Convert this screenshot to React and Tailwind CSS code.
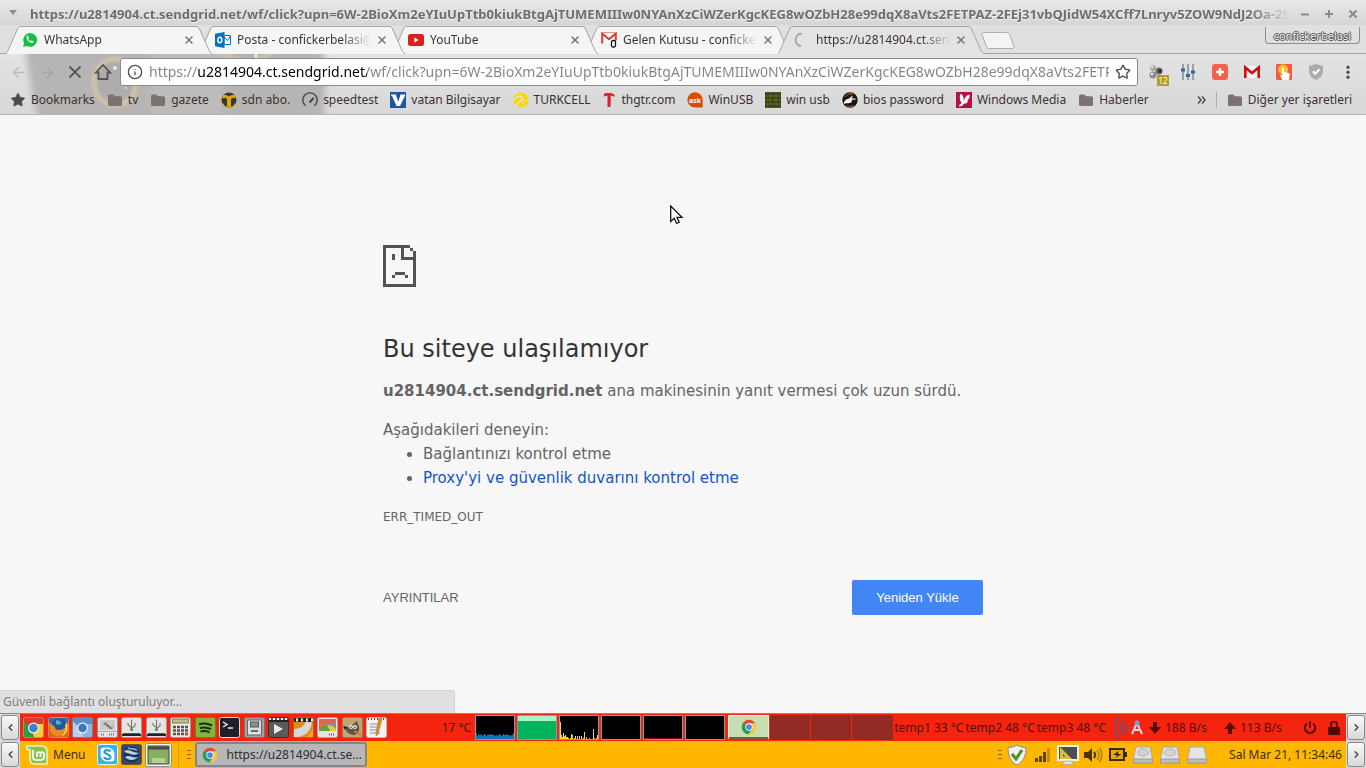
import { useState } from 'react';
import { ChevronLeft, ChevronRight, X, Star, Info, ArrowLeft, ArrowRight } from 'lucide-react';

const PAGE_URL =
  'https://u2814904.ct.sendgrid.net/wf/click?upn=6W-2BioXm2eYIuUpTtb0kiukBtgAjTUMEMIIIw0NYAnXzCiWZerKgcKEG8wOZbH28e99dqX8aVts2FETPAZ-2FEj31vbQJidW54XCff7Lnryv5ZOW9NdJ2Oa-2B';

/* ---------- small favicons ---------- */

const WhatsAppIcon = () => (
  <svg width="16" height="16" viewBox="0 0 16 16" className="shrink-0">
    <path d="M1 15l1.1-3.7A6.9 6.9 0 1 1 4.8 14z" fill="#12c143" />
    <path d="M5 3.800c.6-.4 1-.1 1.200.4l.6 1.500c.1.500-.5.8-.6 1.200.6 1.100 1.400 1.800 2.500 2.300.5-.2.800-1 1.300-.8l1.500.8c.4.3.2 1-.2 1.500-2.100 1.900-8.500-3.200-6.300-6.900z" fill="#fff" />
  </svg>
);

const OutlookIcon = () => (
  <svg width="16" height="16" viewBox="0 0 16 16" className="shrink-0">
    <path d="M9 3.500h6.500v9H9z" fill="#fff" stroke="#0072c6" />
    <path d="M9 5l3.500 3.500L15.500 4" fill="none" stroke="#0072c6" />
    <path d="M0 1.800L9.500 0v16L0 14.200z" fill="#0072c6" />
    <ellipse cx="4.800" cy="8" rx="2" ry="2.700" fill="none" stroke="#fff" strokeWidth="1.500" />
  </svg>
);

const YouTubeIcon = () => (
  <svg width="16" height="16" viewBox="0 0 16 16" className="shrink-0">
    <rect y="2" width="16" height="12" rx="2.500" fill="#d8201f" />
    <path d="M6.300 5.500v5L10.700 8z" fill="#fff" />
  </svg>
);

const GmailTabIcon = () => (
  <svg width="16" height="16" viewBox="0 0 16 16" className="shrink-0">
    <rect x="1" y="1" width="14" height="10" fill="#fff" />
    <path d="M1.200 11.500V1.500L8 7.300l6.800-5.800v7" fill="none" stroke="#dd3b30" strokeWidth="2" />
    <path d="M1 .5h14" stroke="#e9938c" />
    <rect x="10.500" y="8.500" width="4" height="6.500" rx="1.500" fill="#fff" stroke="#111" strokeWidth="1.300" />
  </svg>
);

const Spinner = () => (
  <svg width="16" height="16" viewBox="0 0 16 16" className="shrink-0">
    <path d="M8 1.700A6.300 6.300 0 0 0 3.500 12.500c1 1 2 1.500 3.500 1.700" fill="none" stroke="#a4a4a4" strokeWidth="1.800" />
  </svg>
);

const FolderIcon = () => (
  <svg width="16" height="16" viewBox="0 0 16 16" className="shrink-0">
    <path d="M1 4a1.500 1.500 0 0 1 1.500-1.500h3.700L8 4.200h5.500A1.500 1.500 0 0 1 15 5.700v6.800a1.500 1.500 0 0 1-1.500 1.500h-11A1.500 1.500 0 0 1 1 12.500z" fill="#7d7272" />
  </svg>
);

const SdnIcon = () => (
  <svg width="16" height="16" viewBox="0 0 16 16" className="shrink-0">
    <circle cx="8" cy="8" r="7.500" fill="#3b372c" />
    <path d="M1 4.500C3 2 6 3 8 4.500 10 3 13 2 15 4.500l-1 2c-2-.8-3.500-.5-4 1V15H6V7.500c-.5-1.500-2-1.800-4-1z" fill="#d7a812" />
    <path d="M1.500 11c2 3.500 4 4.500 6.500 4.500s4.500-1 6.500-4.500" fill="none" stroke="#c49a18" />
  </svg>
);

const SpeedIcon = () => (
  <svg width="16" height="16" viewBox="0 0 16 16" className="shrink-0">
    <path d="M3.600 13.700a7.200 7.200 0 1 1 8.800 0" fill="none" stroke="#555" strokeWidth="1.600" />
    <path d="M7.500 10.500L11.500 6" stroke="#444" strokeWidth="2" />
  </svg>
);

const VatanIcon = () => (
  <svg width="16" height="16" viewBox="0 0 16 16" className="shrink-0">
    <rect width="16" height="16" fill="#1d579f" />
    <path d="M1 2.500h5.200v1.200l2 6 2-6V2.500H15v1.200L10 14H6.500L2 3.700H1z" fill="#fff" />
  </svg>
);

const TurkcellIcon = () => (
  <svg width="16" height="16" viewBox="0 0 16 16" className="shrink-0">
    <circle cx="8" cy="8" r="7.500" fill="#fbd608" />
    <path d="M0 7.500c3 0 4-3.500 7-3.500 2.500 0 3.500 3 1 4.500S4 10.500 4 14" fill="none" stroke="#e4e4e4" strokeWidth="1.500" />
    <path d="M9 12c1-3 3-4 6-4" fill="none" stroke="#efe9b0" />
  </svg>
);

const ThIcon = () => (
  <svg width="14" height="16" viewBox="0 0 14 16" className="shrink-0">
    <path d="M2 4.500V1.800l2-.8h5l3.500 1.500V5L10 3.800H8.700V14l-1 1H5.500V3.800z" fill="#d9262c" />
  </svg>
);

const AskIcon = () => (
  <svg width="16" height="16" viewBox="0 0 16 16" className="shrink-0">
    <path d="M8 .3A7.700 7.700 0 0 1 15.700 8v7.500H8A7.600 7.600 0 0 1 8 .3z" fill="#dc4a06" />
    <text x="8" y="10.500" textAnchor="middle" fontSize="7" fontWeight="bold" fontFamily="Noto Sans, sans-serif" fill="#fff">ask</text>
  </svg>
);

const MossIcon = () => (
  <svg width="16" height="16" viewBox="0 0 16 16" className="shrink-0">
    <rect width="16" height="16" fill="#4a541d" />
    <path d="M0 2h16M0 6h16M0 10h16M0 14h16" stroke="#2c3511" strokeWidth="1.500" strokeDasharray="2 1 1 2" />
    <path d="M1 4h15M0 8h15M2 12h14" stroke="#6f7830" strokeDasharray="1 2 2 1" />
  </svg>
);

const BiosIcon = () => (
  <svg width="16" height="16" viewBox="0 0 16 16" className="shrink-0">
    <circle cx="8" cy="8" r="7.700" fill="#1b1512" />
    <path d="M3 5a6 6 0 0 1 8-2.500M4.500 13.500a6 6 0 0 0 7-.2" fill="none" stroke="#8d4b1d" strokeWidth="1.500" />
    <path d="M2 10l2-2.500 3-1L10 4l1 .8L9.500 6.500h4v1.300H10l-.5 2.700-3 .8H4L2 12z" fill="#f4f1ee" />
  </svg>
);

const MediaIcon = () => (
  <svg width="16" height="16" viewBox="0 0 16 16" className="shrink-0">
    <rect width="16" height="16" fill="#b50f43" />
    <path d="M4.500 2c2.500 0 3.500 4 3.300 7.500C8.500 5.500 10.500 3 13.500 2.500c.5 3-.5 4.500-2 5.500 1 1.500-.5 3.500-2.500 3.500l-1.500.3c-.5 2-2 2.700-4.500 2.700 0-1.500 1-2.700 2.800-3.200C3.500 8 3.300 4 4.500 2z" fill="#fff" />
  </svg>
);

const ChromeIcon = ({ size = 16 }) => (
  <svg width={size} height={size} viewBox="0 0 24 24" className="shrink-0">
    <circle cx="12" cy="12" r="11" fill="#f5c83a" />
    <path d="M12 12L2.500 6.500A11 11 0 0 1 21.500 6.500H12z" fill="#dd4b3e" />
    <path d="M12 12L2.500 6.500A11 11 0 0 0 11.500 23l5-8.500z" fill="#1fa05c" />
    <circle cx="12" cy="12" r="5.500" fill="#fff" />
    <circle cx="12" cy="12" r="4.300" fill="#4a86e8" />
  </svg>
);

/* ---------- browser window ---------- */

const tabs = [
  { title: 'WhatsApp', icon: <WhatsAppIcon />, layer: 'z-4' },
  { title: 'Posta - confickerbelasi@hotmail', icon: <OutlookIcon />, layer: 'z-3' },
  { title: 'YouTube', icon: <YouTubeIcon />, layer: 'z-2' },
  { title: 'Gelen Kutusu - confickerbelasi', icon: <GmailTabIcon />, layer: 'z-1' },
  { title: 'https://u2814904.ct.sendgrid.net', icon: <Spinner />, layer: 'z-5', active: true },
];

const bookmarks = [
  { label: 'Bookmarks', icon: <Star size={16} fill="#4f4a4a" stroke="#4f4a4a" strokeWidth={1} strokeLinejoin="miter" className="shrink-0" /> },
  { label: 'tv', icon: <FolderIcon /> },
  { label: 'gazete', icon: <FolderIcon /> },
  { label: 'sdn abo.', icon: <SdnIcon /> },
  { label: 'speedtest', icon: <SpeedIcon /> },
  { label: 'vatan Bilgisayar', icon: <VatanIcon /> },
  { label: 'TURKCELL', icon: <TurkcellIcon /> },
  { label: 'thgtr.com', icon: <ThIcon /> },
  { label: 'WinUSB', icon: <AskIcon /> },
  { label: 'win usb', icon: <MossIcon /> },
  { label: 'bios password', icon: <BiosIcon /> },
  { label: 'Windows Media', icon: <MediaIcon /> },
  { label: 'Haberler', icon: <FolderIcon /> },
];

function TitleBar() {
  return (
    <header className="flex h-[25px] items-center bg-linear-to-b from-[#e9e9e9] to-[#d5d5d5] pl-2 pr-[5px]">
      <button aria-label="Pencere menüsü" className="mr-3 shrink-0">
        <svg width="10" height="6" viewBox="0 0 10 6" className="block">
          <path d="M1 0h8L5 5z" fill="#8f8f8f" />
        </svg>
      </button>
      <h1 className="min-w-0 flex-1 overflow-hidden whitespace-nowrap pt-[2px] text-[13px] leading-5 font-bold text-[#6e6e6e] [text-shadow:0_1px_0_#f4f4f4] [mask-image:linear-gradient(to_left,transparent,#000_40px)]">
        {PAGE_URL}
      </h1>
      <div className="ml-2 flex shrink-0 gap-2 pt-[2px]">
        <button aria-label="Küçült" className="flex size-4 items-center justify-center">
          <svg width="10" height="10" viewBox="0 0 10 10"><path d="M1 5.500h8" stroke="#8b8b8b" strokeWidth="2" /></svg>
        </button>
        <button aria-label="Büyüt" className="flex size-4 items-center justify-center">
          <svg width="10" height="10" viewBox="0 0 10 10"><path d="M1 5h8M5 1v8" stroke="#8b8b8b" strokeWidth="2" /></svg>
        </button>
        <button aria-label="Kapat" className="flex size-4 items-center justify-center">
          <svg width="10" height="10" viewBox="0 0 10 10"><path d="M1.500 1.500l7 7M8.500 1.500l-7 7" stroke="#8b8b8b" strokeWidth="2.200" /></svg>
        </button>
      </div>
    </header>
  );
}

function Tab({ tab }) {
  return (
    <div className={`relative -mr-[13px] flex h-7 w-[206px] items-center pl-4 pr-[17px] ${tab.layer}`}>
      <svg viewBox="0 0 206 28" preserveAspectRatio="none" className="absolute inset-0 -z-10 h-full w-full">
        <path
          d="M0 28L1.500 25.500L11.500 3C12.500 1 13 .5 15 .5H190C192 .5 192.500 1 193.500 3L203.500 25.500L206 28"
          fill={tab.active ? '#e3e3e3' : '#f5f5f5'}
          stroke="#a5a5a5"
        />
      </svg>
      {tab.icon}
      <button className="ml-[6px] min-w-0 flex-1 overflow-hidden whitespace-nowrap text-left text-xs text-[#3c3535] [mask-image:linear-gradient(to_left,transparent,#000_30px)]">
        {tab.title}
      </button>
      <button aria-label="Sekmeyi kapat" className="ml-1 shrink-0">
        <X size={12} strokeWidth={3} color="#7d7474" />
      </button>
    </div>
  );
}

function TabStrip() {
  return (
    <div className="relative isolate flex h-[29px] items-end bg-[#e0e0e2] pl-[6px] shadow-[inset_0_-1px_0_#a5a5a5]">
      {tabs.map((tab) => (
        <Tab key={tab.title} tab={tab} />
      ))}
      <button aria-label="Yeni sekme" className="mb-1 ml-[9px]">
        <svg width="36" height="18" viewBox="0 0 36 18" className="block">
          <path d="M3.500.5H26c2 0 3 .5 3.500 2l4.500 12c.5 1.500 0 2-1.500 2H10c-2 0-3-.5-3.500-2L2 2.500C1.500 1 2 .5 3.500.5z" fill="#f4f4f4" stroke="#adadad" />
        </svg>
      </button>
      <button className="mb-[10px] ml-auto mr-[6px] h-[17px] rounded-b border border-t-0 border-[#8c8c8c] px-2 text-[11px] leading-[17px] text-[#f0f0f0] [text-shadow:1px_0_0_#555,-1px_0_0_#555,0_1px_0_#555,0_-1px_0_#555]">
        confickerbelasi
      </button>
    </div>
  );
}

// Soft cat portrait of the browser theme, behind the toolbar rows
function ThemeArt() {
  return (
    <svg width="360" height="61" viewBox="0 0 360 61" className="absolute left-0 top-0 -z-10">
      <defs>
        <filter id="fur" x="-10%" y="-20%" width="120%" height="140%">
          <feGaussianBlur stdDeviation="3" />
        </filter>
        <filter id="iris">
          <feGaussianBlur stdDeviation="1" />
        </filter>
      </defs>
      <path d="M24 -10H323L326 30L323 75H40L32 40z" fill="#b7b5b4" filter="url(#fur)" />
      <path d="M150 -10h80l-10 80h-70z" fill="#bebcba" filter="url(#fur)" />
      <ellipse cx="115" cy="28" rx="21" ry="23" fill="#afadac" stroke="#cdc3aa" strokeWidth="5" filter="url(#iris)" />
      <path d="M222 -4c6 14 42 14 50 0" fill="#b4b2b1" stroke="#cdc3aa" strokeWidth="4" filter="url(#iris)" />
      <circle cx="115" cy="14" r="2" fill="#e3e6ea" />
      <circle cx="126" cy="34" r="1" fill="#e3e6ea" />
      <circle cx="256" cy="2" r="2" fill="#e3e6ea" />
    </svg>
  );
}

function Extensions() {
  return (
    <div className="flex shrink-0 items-center gap-4">
      <button aria-label="Ghostery" className="relative">
        <svg width="16" height="16" viewBox="0 0 16 16">
          <circle cx="5" cy="4" r="3" fill="#a5a5a5" />
          <circle cx="5" cy="11" r="3.500" fill="#8d8d8d" />
          <circle cx="11" cy="7" r="3.500" fill="#6b6b6b" />
          <circle cx="12" cy="7" r="2" fill="#333" />
          <circle cx="4" cy="3" r="1.300" fill="#eee" />
          <circle cx="4" cy="10" r="1.300" fill="#eee" />
        </svg>
        <span className="absolute left-[9px] top-[11px] h-[11px] w-3 bg-[#b39b28] text-center text-[8px] leading-[11px] text-white">12</span>
      </button>
      <button aria-label="Ekolayzer">
        <svg width="16" height="16" viewBox="0 0 16 16">
          <path d="M3 0v16M8 0v16M13 0v16" stroke="#8b8b8b" strokeWidth="1.500" />
          <path d="M1 6h4M6 11.500h4M11 8h4" stroke="#2f67a8" strokeWidth="3" />
        </svg>
      </button>
      <button aria-label="Ekle">
        <svg width="16" height="16" viewBox="0 0 16 16">
          <rect width="16" height="16" rx="3" fill="#f6614b" />
          <path d="M8 4v8M4 8h8" stroke="#fff" strokeWidth="2.400" />
        </svg>
      </button>
      <button aria-label="Gmail">
        <svg width="16" height="16" viewBox="0 0 16 16">
          <rect y="2" width="16" height="12" fill="#f3f3f3" />
          <path d="M1.300 14V3.500L8 9l6.700-5.500V14" fill="none" stroke="#d20f0f" strokeWidth="2.600" />
        </svg>
      </button>
      <button aria-label="Dokun">
        <svg width="16" height="16" viewBox="0 0 16 16">
          <rect width="16" height="16" rx="1" fill="#f65a44" />
          <circle cx="7" cy="5.500" r="5" fill="#f8c331" />
          <path d="M6 4c1-.8 2 0 2 1v3l4 .8c1.500.4 2 1.200 1.800 2.500L13 16H6.500L4 11.500c.5-1 1.500-.5 2 0z" fill="#fff" />
        </svg>
      </button>
      <button aria-label="Koruma">
        <svg width="16" height="16" viewBox="0 0 16 16">
          <path d="M8 0l7 2v5c0 4-3 7.500-7 9-4-1.500-7-5-7-9V2z" fill="#ababab" />
          <path d="M4.800 7.200l2.500 2.500 4.200-4.500" fill="none" stroke="#fff" strokeWidth="2" />
        </svg>
      </button>
      <button aria-label="Menü">
        <svg width="16" height="16" viewBox="0 0 16 16" fill="#595353">
          <circle cx="8" cy="3.200" r="1.700" />
          <circle cx="8" cy="8.200" r="1.700" />
          <circle cx="8" cy="13.200" r="1.700" />
        </svg>
      </button>
    </div>
  );
}

function Toolbar() {
  const [address, setAddress] = useState(PAGE_URL);

  return (
    <div className="flex h-9 items-center px-[10px]">
      <div className="flex shrink-0 items-center gap-3">
        <button aria-label="Geri"><ArrowLeft size={17} color="#bdbbbb" /></button>
        <button aria-label="İleri"><ArrowRight size={17} color="#a5a2a2" /></button>
        <button aria-label="Durdur">
          <svg width="14" height="14" viewBox="0 0 14 14"><path d="M1.500 1.500l11 11M12.500 1.500l-11 11" stroke="#595353" strokeWidth="1.800" /></svg>
        </button>
        <button aria-label="Ana sayfa">
          <svg width="18" height="18" viewBox="0 0 18 18"><path d="M9 2L2 9.500h2.500V16h9V9.500H16z" fill="none" stroke="#595353" strokeWidth="1.800" /></svg>
        </button>
      </div>
      <div className="ml-2 mr-[10px] flex h-7 min-w-0 flex-1 items-center rounded-[3px] border border-[#8d8b8a] bg-white px-[6px]">
        <Info size={16} color="#4f4f4f" className="shrink-0" />
        <input
          aria-label="Adres"
          value={address}
          onChange={(e) => setAddress(e.target.value)}
          className="mx-[6px] min-w-0 flex-1 bg-[linear-gradient(to_right,#828282_48px,#000_48px,#000_218px,#828282_218px)] bg-clip-text text-sm leading-6 text-transparent outline-none"
        />
        <button aria-label="Yer işareti ekle" className="shrink-0">
          <Star size={16} color="#4a4a4a" strokeLinejoin="miter" />
        </button>
      </div>
      <Extensions />
    </div>
  );
}

function BookmarksBar() {
  return (
    <nav className="flex h-6 items-center pb-1 pl-[10px] pr-[14px] text-xs text-[#3c3030]">
      <div className="flex min-w-0 flex-1 gap-3">
        {bookmarks.map((item) => (
          <a key={item.label} href="#" className="flex shrink-0 items-center gap-[5px] whitespace-nowrap">
            {item.icon}
            {item.label}
          </a>
        ))}
      </div>
      <button aria-label="Diğer" className="mr-[10px] flex shrink-0">
        <svg width="9" height="8" viewBox="0 0 9 8"><path d="M1 .5L4 4 1 7.500M5 .5L8 4 5 7.500" fill="none" stroke="#4f4a4a" strokeWidth="1.500" /></svg>
      </button>
      <a href="#" className="flex shrink-0 items-center gap-[5px] border-l border-[#b0b0b0] pl-[10px]">
        <FolderIcon />
        Diğer yer işaretleri
      </a>
    </nav>
  );
}

function SadPage() {
  return (
    <svg width="33" height="42" viewBox="0 0 33 42" shapeRendering="crispEdges" fill="#535353" className="block">
      <path d="M0 0h27v3H3v36h27V6h3v36H0z" />
      <path d="M27 3h3v3h-3zM18 3h3v9h9v3H18zM9 9h3v6H9zM12 27h10v3H12zM9 30h3v3H9zM22 30h3v3h-3z" />
    </svg>
  );
}

function ErrorPage() {
  return (
    <main className="relative flex-1 bg-[#f7f7f7] px-6 font-['DejaVu_Sans',sans-serif] text-[15px] text-[#646464]">
      <div className="mx-auto max-w-[600px] pt-[130px]">
        <SadPage />
        <h2 className="mt-[47px] text-2xl leading-[30px] text-[#333]">Bu siteye ulaşılamıyor</h2>
        <p className="mt-[15px] leading-6">
          <strong>u2814904.ct.sendgrid.net</strong> ana makinesinin yanıt vermesi çok uzun sürdü.
        </p>
        <p className="mt-[15px] leading-6">Aşağıdakileri deneyin:</p>
        <ul className="list-disc pl-10 leading-6">
          <li>Bağlantınızı kontrol etme</li>
          <li>
            <a href="#" className="text-[#1155cc]">Proxy'yi ve güvenlik duvarını kontrol etme</a>
          </li>
        </ul>
        <p className="mt-[15px] text-xs leading-6">ERR_TIMED_OUT</p>
        <div className="mt-[51px] flex items-center justify-between font-['Liberation_Sans',sans-serif] text-[13px]">
          <button>AYRINTILAR</button>
          <button className="h-[35px] w-[131px] rounded-[2px] bg-[#4285f4] text-white">Yeniden Yükle</button>
        </div>
      </div>
      <svg width="14" height="20" viewBox="0 0 14 20" className="absolute left-1/2 top-[90px] -ml-[13px]">
        <path d="M.7 1v15.500l3.500-3.200 2.500 5.200 2.500-1.200-2.300-5H12z" fill="#fff" stroke="#111" strokeWidth="1.300" />
      </svg>
      <div className="absolute bottom-0 left-0 h-[23px] w-1/3 rounded-tr border-r border-t border-[#d3d3d5] bg-[#e0e0e2] pl-[3px] font-['Noto_Sans',sans-serif] text-xs leading-[22px] text-[#857c7c]">
        Güvenli bağlantı oluşturuluyor…
      </div>
    </main>
  );
}

/* ---------- desktop panels ---------- */

const Frame = ({ fill, stroke = '#00000055', children, size = 21 }) => (
  <svg width={size} height="21" viewBox="0 0 21 21" className="block shrink-0">
    <rect x=".5" y=".5" width="20" height="20" rx="2" fill={fill} stroke={stroke} />
    {children}
  </svg>
);

const launchers = [
  {
    name: 'Chrome',
    icon: (
      <Frame fill="#f4cf3a" stroke="#b8912a">
        <path d="M1 1h19v6H10L5 13 1 5z" fill="#d83b2f" />
        <path d="M1 4l8 9 2 7H1z" fill="#2a9c4a" />
        <circle cx="10.500" cy="11" r="5.500" fill="#f2f2f2" />
        <circle cx="10.500" cy="11" r="4.300" fill="#3f7fd0" />
      </Frame>
    ),
  },
  {
    name: 'Firefox',
    icon: (
      <Frame fill="#d06a1c" stroke="#e08a45">
        <path d="M1 1h19v10H1z" fill="#2f6fae" />
        <circle cx="11" cy="9" r="7.500" fill="#1f5a96" />
        <path d="M8 3c3 0 4 1 6 3l-3 2-3-1z" fill="#5ba3d8" />
        <path d="M1 4c1 4 3 3 5 5s0 4 5 4 5-3 8-3c-1 6-4 9-9 9C4 19 1 14 1 4z" fill="#f08a20" />
        <path d="M19 5c2 6 0 13-6 15 4-4 5-8 4-12z" fill="#f7c944" />
      </Frame>
    ),
  },
  {
    name: 'Chromium',
    icon: (
      <Frame fill="#8fb4dc" stroke="#5a86b5">
        <path d="M1 1h19v6H10L5 13 1 5z" fill="#5b8fc8" />
        <path d="M1 4l8 9 2 7H1z" fill="#b7cfe8" />
        <circle cx="10.500" cy="11" r="5.500" fill="#eef3f9" />
        <circle cx="10.500" cy="11" r="4.300" fill="#3f78ba" />
      </Frame>
    ),
  },
  {
    name: 'Disk aracı',
    icon: (
      <Frame fill="#e4e4e4" stroke="#8e8e8e">
        <rect x="3" y="3" width="15" height="10" fill="#cacaca" />
        <path d="M7.500 6l6 5" stroke="#707070" strokeWidth="2" />
        <path d="M6 7.500h3V5M12 11.500h3V9" fill="none" stroke="#858585" />
        <path d="M1 14.500h19" stroke="#aaa" />
        <path d="M4 17.500h4M12 17.500h5" stroke="#777" strokeDasharray="1 1" strokeWidth="2" />
      </Frame>
    ),
  },
  { name: 'USB yazıcı', icon: <UsbTile /> },
  { name: 'USB biçimlendirici', icon: <UsbTile /> },
  {
    name: 'Hesap makinesi',
    icon: (
      <Frame fill="#eee9e0" stroke="#999">
        <rect x="2.500" y="2" width="16" height="4" fill="#b9c389" stroke="#7d7d5d" />
        <path d="M3 10h15M3 13.500h15M3 17h15" stroke="#555" strokeWidth="2.500" strokeDasharray="3 1" />
        <path d="M15 17h3" stroke="#d33" strokeWidth="2.500" />
      </Frame>
    ),
  },
  {
    name: 'Spotify',
    icon: (
      <Frame fill="#81b53c" stroke="#598a22">
        <path d="M4 7.500c4-1.500 9-1 13 1M5 11c4-1.200 7-.8 11 1M5.500 14.500c3-1 6-.7 9 .8" fill="none" stroke="#1d2b10" strokeWidth="2" />
      </Frame>
    ),
  },
  {
    name: 'Uçbirim',
    icon: (
      <Frame fill="#1f2028" stroke="#dedede">
        <path d="M4 5l4 2.500L4 10M9 11h5" fill="none" stroke="#eee" strokeWidth="1.400" />
      </Frame>
    ),
  },
  {
    name: 'Dosya arşivi',
    icon: (
      <Frame fill="#9fa4a4" stroke="#747474">
        <rect x="3.500" y="3" width="14" height="15" fill="#dcdfdf" stroke="#666" />
        <rect x="6.500" y="5" width="8" height="5" fill="#8a9090" stroke="#555" />
        <path d="M7 14h7" stroke="#666" strokeWidth="2" />
      </Frame>
    ),
  },
  {
    name: 'Video oynatıcı',
    icon: (
      <Frame fill="#5a5a5a" stroke="#333">
        <path d="M1 2.500h19" stroke="#eee" strokeWidth="3" strokeDasharray="2 2" />
        <path d="M1 4h19" stroke="#222" strokeWidth="2" />
        <path d="M6 7v10l9-5z" fill="#eaeaea" />
      </Frame>
    ),
  },
  {
    name: 'Video düzenleyici',
    icon: (
      <Frame fill="#e8861d" stroke="#a86a20">
        <path d="M1 12c6 0 11-3 12-9h6c0 9-5 17-16 17H1z" fill="#d9d9d9" />
        <path d="M13 20c4-2 6-6 7-12v12z" fill="#f0a23a" />
        <path d="M1 3h19" stroke="#222" strokeWidth="4" />
        <path d="M3 3h17" stroke="#eee" strokeWidth="3" strokeDasharray="2 3" />
      </Frame>
    ),
  },
  {
    name: 'Ekran ayarları',
    icon: (
      <Frame fill="#e4e4e4" stroke="#a8a8a8">
        <rect x="2" y="2" width="17" height="12" fill="#6b93c9" />
        <path d="M2 2h17v4l-9 1-8 5z" fill="#e5654a" />
        <path d="M2 14c1-4 5-6 8-6l3 6z" fill="#5aa345" />
        <path d="M10 8c4 0 7 1 9 4v2h-6z" fill="#f1c232" />
        <path d="M12 17.500h6" stroke="#666" strokeWidth="2" strokeDasharray="1 1" />
      </Frame>
    ),
  },
  {
    name: 'GIMP',
    icon: (
      <Frame fill="#c2a376" stroke="#9a7c50">
        <path d="M2 9c3 2 6 1 8-1l5-4 2 6c1 5-2 8-6 8-4-1-7-3-9-9z" fill="#5d5346" />
        <circle cx="9" cy="10" r="2" fill="#eee" />
        <circle cx="13" cy="10" r="2" fill="#eee" />
        <path d="M9 9.500v1.500M13 9.500v1.500" stroke="#111" />
        <path d="M1 9l4 1-2 3z" fill="#222" />
        <path d="M12 14l7 4" stroke="#d8752a" strokeWidth="2" />
      </Frame>
    ),
  },
  {
    name: 'Metin düzenleyici',
    icon: (
      <Frame fill="#f3f3f3" stroke="#bbb">
        <path d="M2 2h17" stroke="#9b2b2b" strokeWidth="2" strokeDasharray="1 2" />
        <path d="M4 7h8M4 10h7M4 13h7M4 16h10" stroke="#8a8a8a" />
        <path d="M13 1l3 1-4 15-2 2v-3z" fill="#ef8a28" stroke="#a85d14" strokeWidth=".5" />
      </Frame>
    ),
  },
];

function UsbTile() {
  return (
    <Frame fill="#e4e4e4" stroke="#9b9b9b">
      <path d="M10.500 2.500v10M10.500 10.500L7 8V6M10.500 11.500L14 9V6" fill="none" stroke="#777" strokeWidth="1.100" />
      <circle cx="10.500" cy="12.500" r="1.500" fill="#777" />
      <path d="M1 17h19v2H1z" fill="#222" />
      <path d="M2 16.500h17" stroke="#c22" />
    </Frame>
  );
}

const cpuLoad = [6, 3, 5, 4, 4, 5, 3, 4, 5, 4, 3, 4, 4, 5, 4, 5, 4, 4, 4, 3, 4, 3, 4, 5, 4, 3, 4, 5, 4, 4, 5, 4, 4, 4, 3, 4, 4, 6];
const netLoad = [17, 4, 2, 6, 3, 4, 2, 2, 1, 0, 1, 5, 4, 0, 1, 3, 0, 3, 0, 3, 0, 3, 0, 1, 7, 0, 2, 0, 0, 1, 0, 0, 0, 10, 1, 0, 1, 4];

function Bars({ data, fill }) {
  return data.map((v, i) => <rect key={i} x={1 + i} y={24 - v} width="1" height={v} fill={fill} />);
}

function Monitor({ children }) {
  return (
    <svg width="40" height="25" viewBox="0 0 40 25" shapeRendering="crispEdges" className="block shrink-0">
      <rect x=".5" y=".5" width="39" height="24" fill="#000" stroke="#8d9aa0" />
      {children}
    </svg>
  );
}

function ScrollButton({ label, children }) {
  return (
    <button aria-label={label} className="flex h-[25px] w-[18px] shrink-0 items-center justify-center rounded-[3px] border border-[#8a8a8a] bg-linear-to-b from-[#fafafa] to-[#d8d8d8]">
      {children}
    </button>
  );
}

function Panel({ color, children }) {
  return (
    <div className="flex h-[27px] items-center justify-between bg-[#d6d6d6] text-xs">
      <div className="flex w-5 justify-center">
        <ScrollButton label="Sola kaydır"><ChevronLeft size={11} strokeWidth={3} color="#444" /></ScrollButton>
      </div>
      <div className={`flex h-full min-w-0 flex-1 items-center ${color}`}>{children}</div>
      <div className="flex w-5 justify-center">
        <ScrollButton label="Sağa kaydır"><ChevronRight size={11} strokeWidth={3} color="#444" /></ScrollButton>
      </div>
    </div>
  );
}

function TopPanel() {
  return (
    <Panel color="bg-[#f5240e] text-[#47170c]">
      <div className="ml-[3px] flex w-[364px] shrink-0 justify-between">
        {launchers.map((app) => (
          <button key={app.name} aria-label={app.name} title={app.name}>{app.icon}</button>
        ))}
      </div>
      <div className="ml-auto flex items-center">
        <span className="mr-1">17 °C</span>
        <div className="flex gap-[2px]">
          <Monitor><Bars data={cpuLoad} fill="#0a74b8" /></Monitor>
          <Monitor>
            <rect x="1" y="1" width="38" height="5" fill="#a9f3c8" />
            <rect x="1" y="6" width="38" height="18" fill="#00b35c" />
          </Monitor>
          <Monitor><Bars data={netLoad} fill="#f5d81c" /></Monitor>
          <Monitor />
          <Monitor><rect x="1" y="23" width="38" height="1" fill="#7c0d12" /></Monitor>
          <Monitor />
        </div>
        <div className="ml-[3px] flex h-[25px] gap-px overflow-hidden rounded-[2px]">
          <button aria-label="Çalışma alanı 1" className="flex w-[41px] items-center justify-center border border-b-[3px] border-[#f2f6ec] border-b-[#7a5c46] bg-[#c6deb2]">
            <ChromeIcon />
          </button>
          <button aria-label="Çalışma alanı 2" className="w-10 bg-[#922b24]" />
          <button aria-label="Çalışma alanı 3" className="w-10 bg-[#922b24]" />
          <button aria-label="Çalışma alanı 4" className="w-[41px] bg-[#922b24]" />
        </div>
        <div className="ml-px flex gap-[2px]">
          <span>temp1 33 °C</span>
          <span>temp2 48 °C</span>
          <span>temp3 48 °C</span>
        </div>
      </div>
      <div className="ml-2 flex items-center">
        <svg width="30" height="24" viewBox="0 0 30 24">
          <path d="M6 1C0 7 0 17 6 23M10 5C6 9 6 15 10 19M13 8c-2 2-2 6 0 8" fill="none" stroke="#7c4a72" strokeWidth="2" />
          <path d="M18 18l5-11 5 11M20 14h6" fill="none" stroke="#d6dbe2" strokeWidth="2" />
          <circle cx="23" cy="7" r="2.500" fill="#6fa3d4" />
        </svg>
        <svg width="12" height="12" viewBox="0 0 12 12" className="ml-[5px]"><path d="M4 0h4v5h4l-6 7-6-7h4z" fill="#5a0c06" /></svg>
        <span className="ml-1 w-[59px]">188 B/s</span>
        <svg width="12" height="12" viewBox="0 0 12 12"><path d="M4 12h4V7h4L6 0 0 7h4z" fill="#5a0c06" /></svg>
        <span className="ml-1 w-[59px]">113 B/s</span>
        <button aria-label="Kapat" className="ml-1">
          <svg width="14" height="14" viewBox="0 0 14 14" fill="none" stroke="#5a0c06" strokeWidth="2"><path d="M4 2.500a5.200 5.200 0 1 0 6 0M7 0v7" /></svg>
        </button>
        <button aria-label="Kilitle" className="ml-[11px] mr-[6px]">
          <svg width="12" height="14" viewBox="0 0 12 14"><path d="M3 6V3.500a3 3 0 0 1 6 0V6" fill="none" stroke="#5a0c06" strokeWidth="2" /><rect y="6" width="12" height="8" rx="1" fill="#4d0904" /></svg>
        </button>
      </div>
    </Panel>
  );
}

function Grip() {
  return (
    <svg width="4" height="9" viewBox="0 0 4 9" className="shrink-0"><path d="M0 .5h4M0 4.500h4M0 8.500h4" stroke="#8a6a10" /></svg>
  );
}

function Drive({ blank }) {
  return (
    <svg width="20" height="18" viewBox="0 0 20 18">
      <path d="M3 1h14l2.500 12v4H.5v-4z" fill="#e4e4e4" stroke="#a9a9a9" />
      <path d="M.5 13h19v4H.5z" fill="#bdbdbd" stroke="#9b9b9b" />
      {!blank && <path d="M5 5c2-3 8-3 10 0s-1 5-5 5-7-2-5-5z" fill="#d2d2d2" stroke="#b5b5b5" />}
    </svg>
  );
}

function BottomPanel() {
  return (
    <Panel color="bg-[#ffb700] text-[#3d2c08]">
      <button className="flex items-center pl-[6px]">
        <svg width="22" height="20" viewBox="0 0 22 20">
          <path d="M1 1h14c4 0 6 2 6 6v12H9c-4 0-5-2-5-5V4.500H1z" fill="#8bc34f" stroke="#e9f5da" strokeWidth="1.500" />
          <path d="M7 5v7c0 2 1 3 3 3h5c2 0 3-1 3-3V9c0-2.500-3.500-2.500-3.500 0v3M14.500 9c0-2.500-3.500-2.500-3.500 0v3" fill="none" stroke="#fff" strokeWidth="1.700" />
        </svg>
        <span className="ml-[5px]">Menu</span>
      </button>
      <div className="ml-3 flex items-center gap-[3px]">
        <button aria-label="Skype">
          <Frame fill="#35b2e8" stroke="#e4f4fb">
            <circle cx="10.500" cy="10.500" r="7" fill="#fff" />
            <circle cx="7" cy="7" r="3.500" fill="#fff" />
            <circle cx="14" cy="14" r="3.500" fill="#fff" />
            <path d="M13.500 7.500c-1-2-6-2-6 .5s6 2 6 5-5.500 2.500-6.500 0" fill="none" stroke="#2a9fd6" strokeWidth="2.200" />
          </Frame>
        </button>
        <button aria-label="Google Earth">
          <Frame fill="#39456c" stroke="#6a5434">
            <circle cx="10.500" cy="10.500" r="8" fill="#1c3560" />
            <path d="M3 8c4-5 8 1 15 1-5 4-10 0-15-1zM4 13c5-3 8 2 13 0-3 4-10 4-13 0z" fill="#b8d3ea" />
            <path d="M7 4c3 1.500 6 0 9 2.500" fill="none" stroke="#8fb4d8" strokeWidth="1.500" />
          </Frame>
        </button>
        <button aria-label="Masaüstünü göster">
          <svg width="27" height="24" viewBox="0 0 27 24">
            <rect x=".5" y=".5" width="26" height="23" rx="2" fill="#f4f4f4" stroke="#8e8e8e" />
            <rect x="3" y="3" width="21" height="18" fill="#86b060" stroke="#3e4e32" />
            <path d="M3 5h21" stroke="#4a4a4a" strokeWidth="3" />
            <rect x="7" y="15" width="13" height="5" fill="#b5cf9c" />
          </svg>
        </button>
      </div>
      <span className="ml-[6px] h-full w-px bg-[#d09a10]" />
      <span className="ml-2 mr-1 flex"><Grip /></span>
      <button className="flex h-[25px] w-[172px] items-center gap-2 rounded-[3px] border-2 border-[#858585] bg-[#b7b7b7] pl-[5px] whitespace-nowrap text-[#2e2e2e]">
        <ChromeIcon />
        <span>https://u2814904.ct.se...</span>
      </button>

      <div className="ml-auto flex items-center">
        <Grip />
        <svg width="20" height="22" viewBox="0 0 20 22" className="ml-[5px]">
          <path d="M10 1c3 2 6 2.500 9 2.500C19 12 16 18 10 21 4 18 1 12 1 3.500 4 3.500 7 3 10 1z" fill="#f2f2f2" stroke="#8b8b8b" />
          <path d="M5 10l4 5 6-9" fill="none" stroke="#4f8f24" strokeWidth="3" />
        </svg>
        <svg width="15" height="14" viewBox="0 0 15 14" className="ml-2">
          <path d="M1.500 14v-4M5.500 14V8M9.500 14V4" stroke="#5d4308" strokeWidth="3" />
          <path d="M13.500 14V0" stroke="#c48f0a" strokeWidth="3" />
        </svg>
        <svg width="22" height="20" viewBox="0 0 22 20" className="ml-[7px]">
          <rect x="1" y="1" width="20" height="14" fill="#4a4f52" stroke="#f1f1f1" strokeWidth="2" />
          <path d="M3 2v12h12z" fill="#d8c433" />
          <path d="M6 9v2.500h2.500z" fill="#4a4f52" />
          <path d="M8 16h6l3 3.500H5z" fill="#e4e4e4" stroke="#999" strokeWidth=".6" />
        </svg>
        <svg width="19" height="16" viewBox="0 0 19 16" className="ml-[5px]">
          <path d="M0 5h4l4-4v14l-4-4H0z" fill="#4a3505" />
          <path d="M10 5c1.500 1.500 1.500 4.500 0 6" fill="none" stroke="#4a3505" strokeWidth="2" />
          <path d="M13 3c2.500 2.500 2.500 7.500 0 10M15.500 1c3 4 3 10 0 14" fill="none" stroke="#b58409" strokeWidth="1.700" />
        </svg>
        <svg width="18" height="13" viewBox="0 0 18 13" className="ml-[6px]">
          <rect x="1" y="1" width="14" height="11" fill="#e9a800" stroke="#3b2a04" strokeWidth="2" />
          <path d="M16 4h2v5h-2z" fill="#3b2a04" />
          <path d="M9.500 3L4 7h4l-1.500 3L12.500 6H9z" fill="#3b2a04" />
        </svg>
        <div className="ml-[6px] flex gap-[7px]">
          <Drive />
          <Drive />
          <Drive blank />
        </div>
        <span className="ml-[22px] mr-1">Sal Mar 21, 11:34:46</span>
      </div>
    </Panel>
  );
}

export default function App() {
  return (
    <div className="flex min-h-screen flex-col overflow-hidden font-['Noto_Sans',sans-serif]">
      <TitleBar />
      <TabStrip />
      <div className="relative isolate overflow-hidden border-b border-[#b3b3b3] bg-linear-to-b from-[#e3e3e3] to-[#d8d8d8]">
        <ThemeArt />
        <Toolbar />
        <BookmarksBar />
      </div>
      <ErrorPage />
      <footer className="border-t border-[#8a8a8a]">
        <TopPanel />
        <BottomPanel />
      </footer>
    </div>
  );
}
